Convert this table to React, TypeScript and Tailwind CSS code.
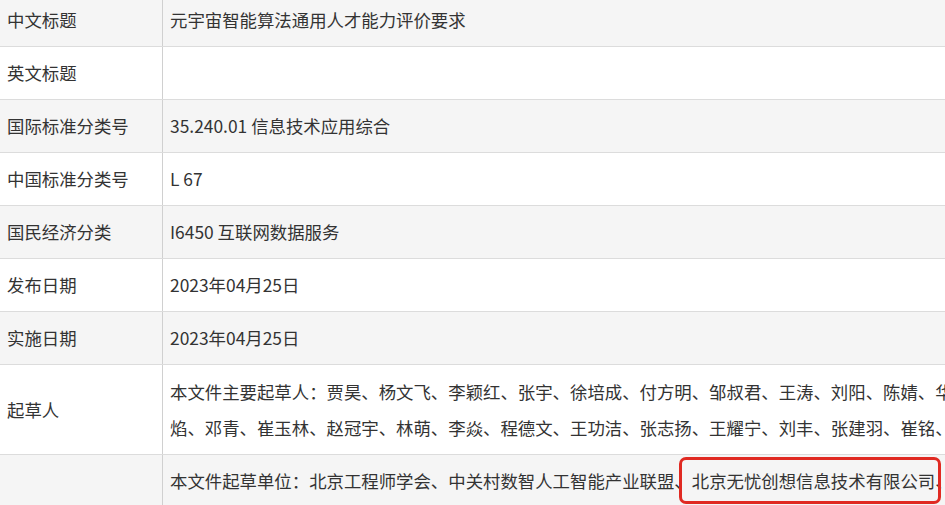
import React from 'react';

interface Row {
  label: string;
  lines: React.ReactNode[];
}

const rows: Row[] = [
  { label: '中文标题', lines: ['元宇宙智能算法通用人才能力评价要求'] },
  { label: '英文标题', lines: [''] },
  { label: '国际标准分类号', lines: ['35.240.01 信息技术应用综合'] },
  { label: '中国标准分类号', lines: ['L 67'] },
  { label: '国民经济分类', lines: ['I6450 互联网数据服务'] },
  { label: '发布日期', lines: ['2023年04月25日'] },
  { label: '实施日期', lines: ['2023年04月25日'] },
  {
    label: '起草人',
    lines: [
      '本文件主要起草人：贾昊、杨文飞、李颖红、张宇、徐培成、付方明、邹叔君、王涛、刘阳、陈婧、华',
      '焰、邓青、崔玉林、赵冠宇、林萌、李焱、程德文、王功洁、张志扬、王耀宁、刘丰、张建羽、崔铭、',
    ],
  },
  {
    label: '',
    lines: [
      <span key="u">
        本文件起草单位：北京工程师学会、中关村数智人工智能产业联盟、
        <span className="relative">
          北京无忧创想信息技术有限公司
          {/* highlight box */}
          <span className="absolute left-[-13px] right-[-6px] top-[-11px] bottom-[-11px] rounded-[7px] border-[3px] border-[#e02a22]" />
        </span>
        、
      </span>,
    ],
  },
];

export default function App() {
  return (
    <div className="w-[945px] h-[505px] overflow-hidden bg-white">
      <div
        className="mt-[-6px] w-[1000px] text-[17.4px] text-[#333]"
        style={{ fontFamily: '"Microsoft YaHei", "Noto Sans CJK SC", "Noto Sans", sans-serif' }}
      >
        {rows.map((row, i) => (
          <div
            key={i}
            className={`flex border-b border-[#dcdcdc] ${i % 2 === 0 ? 'bg-[#f5f5f5]' : 'bg-white'}`}
          >
            <div className="w-[163px] shrink-0 border-r border-[#d0d0d0] pl-[7px] flex items-center">
              <span className="leading-[36px] whitespace-nowrap">{row.label}</span>
            </div>
            <div className={`flex-1 pl-[7px] flex flex-col justify-center ${row.lines.length > 1 ? 'pt-[9px] pb-[8px]' : 'py-[8px]'}`}>
              {row.lines.map((line, j) => (
                <div key={j} className="leading-[36px] min-h-[36px] whitespace-nowrap">
                  {line}
                </div>
              ))}
            </div>
          </div>
        ))}
      </div>
    </div>
  );
}
